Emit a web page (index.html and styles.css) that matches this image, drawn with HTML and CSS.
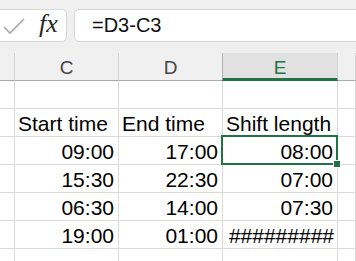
FILE: index.html
```html
<!DOCTYPE html>
<html lang="en">
<head>
    <meta charset="UTF-8">
    <meta name="viewport" content="width=device-width, initial-scale=1.0">
    <title>Shift length</title>
    <link rel="stylesheet" href="styles.css">
</head>
<body>

    <div class="formula-bar">
        <div class="fx-box">
            <svg class="check" width="22" height="17" viewBox="0 0 22 17">
                <path d="M1 9 L7 15 L21 1" fill="none" stroke="#a8a8a8" stroke-width="1.6"/>
            </svg>
            <span class="fx">fx</span>
        </div>
        <div class="formula-input">=D3-C3</div>
    </div>

    <div class="sheet">
        <!-- column headers -->
        <div class="col-head"></div>
        <div class="col-head">C</div>
        <div class="col-head">D</div>
        <div class="col-head active">E</div>
        <div class="col-head"></div>

        <!-- row 1 -->
        <div class="cell"></div>
        <div class="cell"></div>
        <div class="cell"></div>
        <div class="cell"></div>
        <div class="cell"></div>

        <!-- row 2 -->
        <div class="cell"></div>
        <div class="cell">Start time</div>
        <div class="cell">End time</div>
        <div class="cell">Shift length</div>
        <div class="cell"></div>

        <!-- row 3 -->
        <div class="cell"></div>
        <div class="cell num">09:00</div>
        <div class="cell num">17:00</div>
        <div class="cell num selected">08:00<span class="fill-handle"></span></div>
        <div class="cell"></div>

        <!-- row 4 -->
        <div class="cell"></div>
        <div class="cell num">15:30</div>
        <div class="cell num">22:30</div>
        <div class="cell num">07:00</div>
        <div class="cell"></div>

        <!-- row 5 -->
        <div class="cell"></div>
        <div class="cell num">06:30</div>
        <div class="cell num">14:00</div>
        <div class="cell num">07:30</div>
        <div class="cell"></div>

        <!-- row 6 -->
        <div class="cell"></div>
        <div class="cell num">19:00</div>
        <div class="cell num">01:00</div>
        <div class="cell num hashes">#########</div>
        <div class="cell"></div>

        <!-- row 7 -->
        <div class="cell"></div>
        <div class="cell"></div>
        <div class="cell"></div>
        <div class="cell"></div>
        <div class="cell"></div>
    </div>

</body>
</html>
```

FILE: styles.css
```css
body {
    margin: 0;
    height: 261px;
    background: #f0f0f0;
    font-family: "Liberation Sans", Arial, sans-serif;
    overflow: hidden;
}

/* Formula bar */
.formula-bar {
    display: flex;
    gap: 7px;
    padding-top: 9px;
    margin-left: -10px;
    margin-bottom: 11px;
    height: 33px;
}

.fx-box,
.formula-input {
    box-sizing: border-box;
    height: 33px;
    background: #ffffff;
    border: 1px solid #d6d6d6;
    border-radius: 5px;
}

.fx-box {
    width: 77px;
    display: flex;
    align-items: center;
    padding-left: 12px;
    gap: 14px;
}

.check {
    margin-top: 1px;
}

.fx {
    font-family: "Liberation Serif", serif;
    font-style: italic;
    font-size: 26px;
    color: #262626;
    margin-top: -3px;
}

.formula-input {
    flex: 1;
    display: flex;
    align-items: center;
    padding-left: 17px;
    font-size: 20px;
    color: #111111;
    margin-right: -10px;
}

/* Sheet grid */
.sheet {
    display: grid;
    grid-template-columns: 15px 104px 104px 115px 1fr;
    grid-auto-rows: 28px;
    background: #ffffff;
}

.col-head {
    box-sizing: border-box;
    background: #f0f0f0;
    border-right: 1px solid #d4d4d4;
    border-bottom: 1px solid #a9a9a9;
    display: flex;
    align-items: center;
    justify-content: center;
    font-size: 19px;
    color: #444444;
    padding-top: 2px;
}

.col-head.active {
    background: #e1e1e1;
    color: #217346;
    border-left: 1px solid #b5b5b5;
    margin-left: -1px;
    border-bottom: 3px solid #217346;
    padding-top: 4px;
}

.cell {
    box-sizing: border-box;
    border-right: 1px solid #dadada;
    border-bottom: 1px solid #dadada;
    display: flex;
    align-items: flex-end;
    padding: 0 4px 0 3px;
    font-size: 21px;
    color: #000000;
    white-space: nowrap;
}

.cell.num {
    justify-content: flex-end;
}

.cell.hashes {
    padding-right: 3px;
}

.cell.selected {
    position: relative;
}

.cell.selected::after {
    content: "";
    position: absolute;
    left: -2px;
    top: -2px;
    right: -1px;
    bottom: -1px;
    border: 2px solid #217346;
    z-index: 1;
}

.fill-handle {
    position: absolute;
    right: -4px;
    bottom: -4px;
    width: 6px;
    height: 6px;
    background: #217346;
    border: 1px solid #ffffff;
    z-index: 2;
}
```
